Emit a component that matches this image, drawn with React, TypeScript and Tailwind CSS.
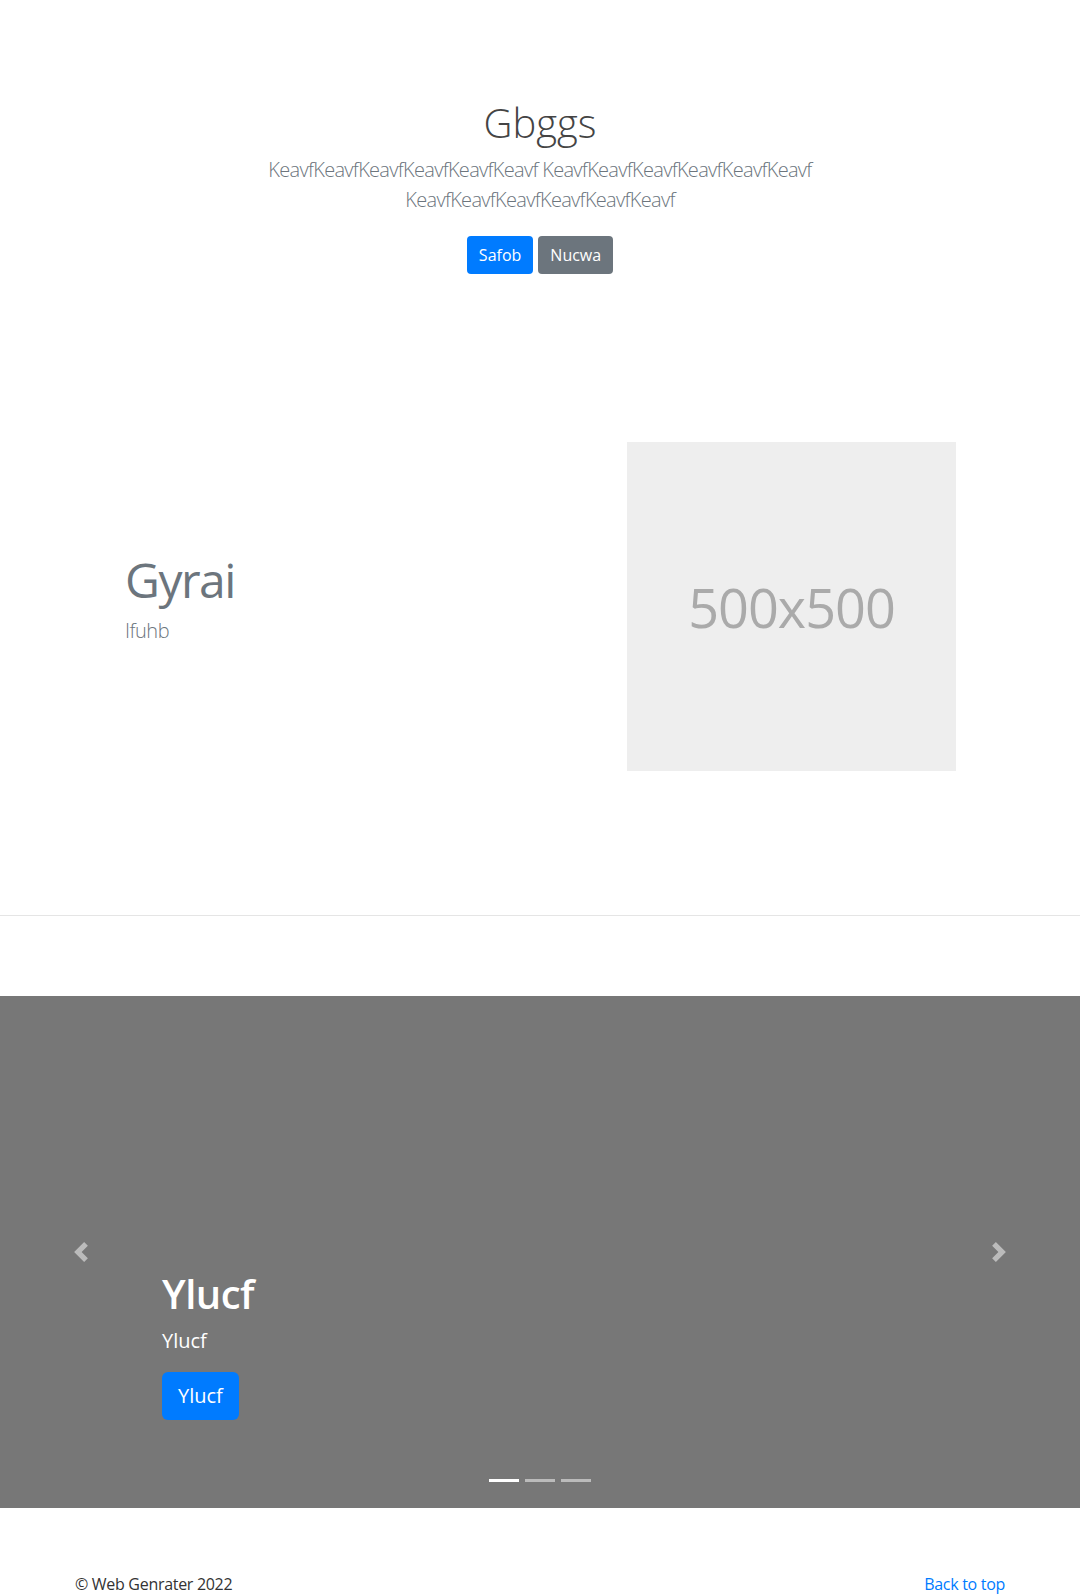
const font = { fontFamily: '"Open Sans", "Noto Sans", sans-serif' };

const PrevIcon = () => (
  <svg width="20" height="20" viewBox="0 0 8 8" fill="#fff">
    <path d="M5.25 0l-4 4 4 4 1.5-1.5L4.25 4l2.5-2.5L5.25 0z" />
  </svg>
);

const NextIcon = () => (
  <svg width="20" height="20" viewBox="0 0 8 8" fill="#fff">
    <path d="M2.75 0l-1.5 1.5L3.75 4l-2.5 2.5L2.75 8l4-4-4-4z" />
  </svg>
);

export default function App() {
  return (
    <div className="min-h-[1660px] bg-white text-[#212529]" style={font}>
      {/* jumbotron */}
      <section className="pt-[99px] text-center">
        <h1 className="text-[40px] font-light leading-[48px] mb-2 text-[#444]">Gbggs</h1>
        <p className="mx-auto max-w-[680px] text-[20px] font-light leading-[30px] tracking-[-0.7px] text-[#6c757d]">
          KeavfKeavfKeavfKeavfKeavfKeavf KeavfKeavfKeavfKeavfKeavfKeavf
          KeavfKeavfKeavfKeavfKeavfKeavf
        </p>
        <div className="flex justify-center gap-[5px] mt-[21px]">
          <button className="h-[38px] px-3 rounded text-white text-base bg-[#007bff]">
            Safob
          </button>
          <button className="h-[38px] px-3 rounded text-white text-base bg-[#6c757d]">
            Nucwa
          </button>
        </div>
      </section>

      {/* featurette */}
      <div className="mx-auto max-w-[960px] px-[15px] mt-[168px]">
        <div className="flex items-center">
          <div className="flex-1 pl-[50px] pb-[12px]">
            <h2 className="text-[48px] leading-none tracking-[-1.5px] text-[#6c757d] mb-[12px]">
              Gyrai
            </h2>
            <p className="text-[20px] font-light leading-[30px] tracking-[-0.5px] text-[#6c757d]">Ifuhb</p>
          </div>
          <div className="w-[329px] h-[329px] mr-[49px] bg-[#eee] flex items-center justify-center">
            <span className="text-[54px] tracking-[-1px] text-[#aaa] leading-none">500x500</span>
          </div>
        </div>
      </div>

      <div className="mt-[144px] border-t border-[#e5e5e5]" />

      {/* carousel */}
      <div className="relative mt-[80px] h-[512px] bg-[#777] flex flex-col justify-end pb-[88px] pl-[15%] text-white">
        <h1 className="text-[40px] font-semibold leading-[48px] mb-2 tracking-[-0.5px]">Ylucf</h1>
        <p className="text-[20px] leading-[30px] mb-4">Ylucf</p>
        <div>
          <button className="h-[48px] px-4 rounded-md text-[20px] bg-[#007bff]">Ylucf</button>
        </div>

        <div className="absolute left-0 top-0 bottom-0 w-[15%] flex items-center justify-center opacity-50">
          <PrevIcon />
        </div>
        <div className="absolute right-0 top-0 bottom-0 w-[15%] flex items-center justify-center opacity-50">
          <NextIcon />
        </div>

        <div className="absolute left-0 right-0 top-[483px] flex justify-center gap-[6px]">
          <span className="w-[30px] h-[3px] bg-white" />
          <span className="w-[30px] h-[3px] bg-white opacity-50" />
          <span className="w-[30px] h-[3px] bg-white opacity-50" />
        </div>
      </div>

      {/* footer */}
      <footer className="mx-auto max-w-[960px] px-[15px] mt-[64px] flex justify-between text-base leading-6 tracking-[-0.3px]">
        <p className="text-[#333]">© Web Genrater 2022</p>
        <a href="#" className="text-[#007bff]">
          Back to top
        </a>
      </footer>
    </div>
  );
}
